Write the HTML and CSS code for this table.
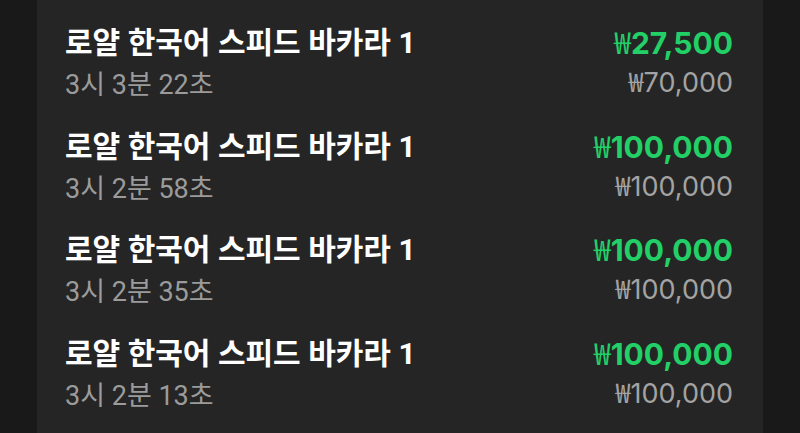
FILE: index.html
```html
<!DOCTYPE html>
<html lang="ko">
<head>
<meta charset="utf-8">
<link rel="stylesheet" href="styles.css">
</head>
<body>
<div class="panel">
  <div class="row">
    <div class="info">
      <div class="title">로얄 한국어 스피드 바카라 1</div>
      <div class="time">3시 3분 22초</div>
    </div>
    <div class="amounts">
      <div class="win"><span class="won">₩</span>27,500</div>
      <div class="bet"><span class="won">₩</span>70,000</div>
    </div>
  </div>
  <div class="row">
    <div class="info">
      <div class="title">로얄 한국어 스피드 바카라 1</div>
      <div class="time">3시 2분 58초</div>
    </div>
    <div class="amounts">
      <div class="win"><span class="won">₩</span>100,000</div>
      <div class="bet"><span class="won">₩</span>100,000</div>
    </div>
  </div>
  <div class="row">
    <div class="info">
      <div class="title">로얄 한국어 스피드 바카라 1</div>
      <div class="time">3시 2분 35초</div>
    </div>
    <div class="amounts">
      <div class="win"><span class="won">₩</span>100,000</div>
      <div class="bet"><span class="won">₩</span>100,000</div>
    </div>
  </div>
  <div class="row">
    <div class="info">
      <div class="title">로얄 한국어 스피드 바카라 1</div>
      <div class="time">3시 2분 13초</div>
    </div>
    <div class="amounts">
      <div class="win"><span class="won">₩</span>100,000</div>
      <div class="bet"><span class="won">₩</span>100,000</div>
    </div>
  </div>
</div>
</body>
</html>
```
FILE: styles.css
```css
html, body {
  margin: 0;
  padding: 0;
  background: #191919;
  height: 100%;
  overflow: hidden;
}
body {
  font-family: Roboto, "Noto Sans CJK KR", sans-serif;
}
.panel {
  margin: 0 37px;
  background: #252525;
  min-height: 100%;
  padding: 11px 30px 0 28px;
  box-sizing: border-box;
}
.row {
  display: flex;
  justify-content: space-between;
  align-items: flex-start;
  padding: 12px 0 11.5px;
}
.title {
  font-size: 30px;
  font-weight: 700;
  color: #ffffff;
  line-height: 40px;
  height: 40px;
  white-space: nowrap;
}
.time {
  font-size: 27px;
  color: #9b9b9b;
  line-height: 44px;
  height: 40px;
  white-space: nowrap;
}
.amounts {
  text-align: right;
  font-family: Inter, "Noto Sans CJK KR", sans-serif;
}
.win {
  font-size: 30px;
  font-weight: 700;
  color: #22d067;
  line-height: 36px;
  height: 40px;
}
.bet {
  font-size: 27px;
  color: #a3a3a3;
  line-height: 36px;
  height: 40px;
}
.won {
  font-family: "Noto Sans CJK KR", sans-serif;
  font-weight: 400;
}
```
